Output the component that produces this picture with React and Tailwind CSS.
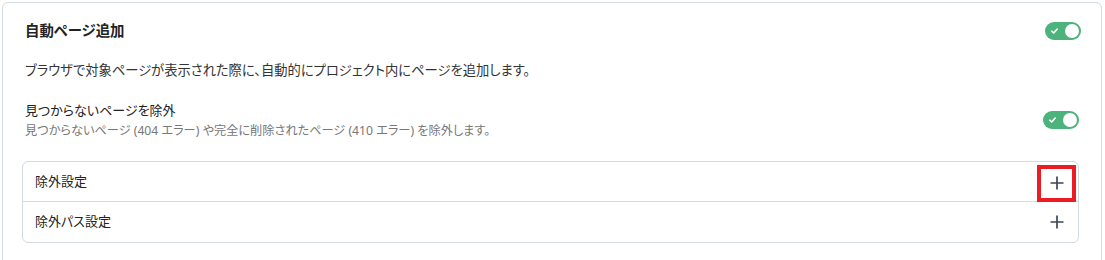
import React from "react";

function Toggle() {
  return (
    <div className="relative h-[18px] w-[36px] shrink-0 rounded-full bg-[#4bb37b]">
      <svg className="absolute left-[6px] top-[6px]" width="7" height="6" viewBox="0 0 7 6" fill="none">
        <path d="M0.8 3.2 L2.7 5 L6.2 1" stroke="white" strokeWidth="1.6" strokeLinecap="round" strokeLinejoin="round" />
      </svg>
      <div className="absolute right-[2px] top-[2px] h-[14px] w-[14px] rounded-full bg-white" />
    </div>
  );
}

function Plus() {
  return (
    <svg width="14" height="14" viewBox="0 0 14 14" fill="none">
      <path d="M7 0.5 V13.5 M0.5 7 H13.5" stroke="#3d4757" strokeWidth="1.7" />
    </svg>
  );
}

export default function App() {
  return (
    <div className="bg-white pl-[2px] pr-[3px] pt-[2px] font-['Noto_Sans','Noto_Sans_CJK_JP',sans-serif] [font-feature-settings:'palt']">
      <div className="h-[300px] rounded-md border border-[#d3dae3] bg-white pl-[22px] pr-[20px] pt-[18px]">
        <div className="flex h-[20px] items-center justify-between">
          <div className="text-[14.4px] font-bold leading-[20px] text-[#222]">自動ページ追加</div>
          <Toggle />
        </div>
        <div className="mt-[19px] text-[13.3px] leading-[20px] text-[#333]">
          ブラウザで対象ページが表示された際に、自動的にプロジェクト内にページを追加します。
        </div>
        <div className="mt-[20px] flex items-center justify-between pr-[2px]">
          <div>
            <div className="text-[13px] leading-[20px] text-[#222]">見つからないページを除外</div>
            <div className="mt-[2px] text-[12.2px] leading-[18px] text-[#777]">
              見つからないページ (404 エラー) や完全に削除されたページ (410 エラー) を除外します。
            </div>
          </div>
          <Toggle />
        </div>
        <div className="-ml-[3px] mr-[2px] mt-[21px] rounded-md border border-[#d3dae3]">
          <div className="flex h-[40px] items-center justify-between border-b border-[#d3dae3] pl-[12px] pr-[2px]">
            <span className="text-[13px] text-[#222]">除外設定</span>
            <div className="mt-[3px] flex h-[37px] w-[39px] items-center justify-center border-4 border-[#ec1c24]">
              <Plus />
            </div>
          </div>
          <div className="flex h-[40px] items-center justify-between pl-[12px] pr-[2px]">
            <span className="text-[13px] text-[#222]">除外パス設定</span>
            <div className="flex h-[37px] w-[39px] items-center justify-center">
              <Plus />
            </div>
          </div>
        </div>
      </div>
    </div>
  );
}
